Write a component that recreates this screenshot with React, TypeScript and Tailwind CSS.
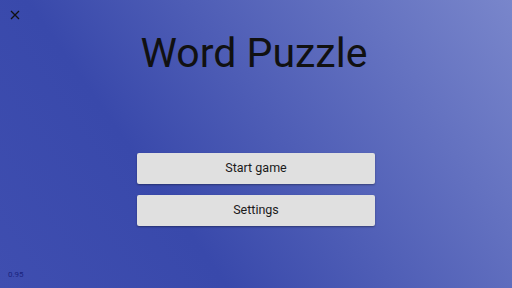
export default function App() {
  return (
    <div className="relative h-[288px] w-[512px] overflow-hidden bg-[linear-gradient(55deg,#3f4eb0_0%,#3949ab_32%,#7986cb_100%)] font-['Roboto',sans-serif]">
      <button className="absolute left-[9px] top-[9px] flex h-[12px] w-[12px] items-center justify-center">
        <svg width="10" height="10" viewBox="0 0 10 10">
          <path d="M1 1L9 9M9 1L1 9" stroke="#111" strokeWidth="1.3" />
        </svg>
      </button>
      <div className="flex flex-col items-center">
        <h1 className="mt-[33px] -ml-[4px] text-[41px] leading-[1] font-normal text-[#111]">Word Puzzle</h1>
        <div className="mt-[79px] flex w-[238px] flex-col gap-[11px]">
          <button className="h-[31px] rounded-[2px] bg-[#e0e0e0] text-[12.5px] text-[#1a1a1a] shadow-[0_1px_2px_rgba(0,0,0,0.35)]">
            Start game
          </button>
          <button className="h-[31px] rounded-[2px] bg-[#e0e0e0] text-[12.5px] text-[#1a1a1a] shadow-[0_1px_2px_rgba(0,0,0,0.35)]">
            Settings
          </button>
        </div>
      </div>
      <div className="absolute bottom-[7px] left-[8px] text-[8px] text-[#1a237e]">0.95</div>
    </div>
  );
}
